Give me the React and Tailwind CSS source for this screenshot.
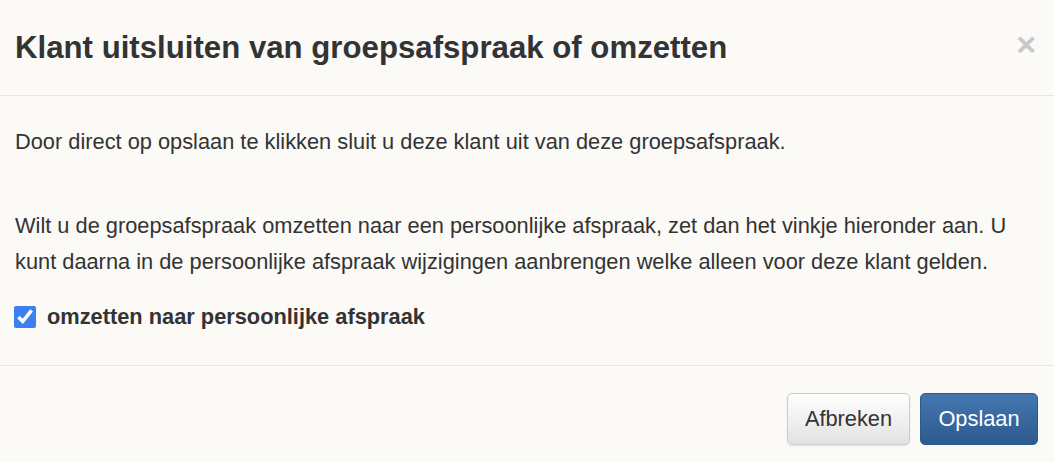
export default function App() {
  return (
    <div className="w-[1054px] h-[462px] bg-[#fbfaf7] text-[#333] font-['Liberation_Sans',Arial,sans-serif] flex flex-col">
      <div className="h-[96px] border-b border-[#e5e5e5] flex items-center justify-between pl-[15px] pr-[18px]">
        <h4 className="text-[31.2px] leading-none font-bold">Klant uitsluiten van groepsafspraak of omzetten</h4>
        <button className="text-[34px] leading-none font-bold text-[#c8c8c8] -mt-[8px]">×</button>
      </div>
      <div className="px-[15px] pt-[28px] text-[21.8px] leading-[36px] h-[270px] border-b border-[#e5e5e5]">
        <p>Door direct op opslaan te klikken sluit u deze klant uit van deze groepsafspraak.</p>
        <p className="mt-[48px]">
          Wilt u de groepsafspraak omzetten naar een persoonlijke afspraak, zet dan het vinkje hieronder aan. U kunt daarna in de persoonlijke afspraak wijzigingen aanbrengen welke alleen voor deze klant gelden.
        </p>
        <label className="flex items-center gap-[11px] mt-[19px] font-bold">
          <input type="checkbox" defaultChecked className="w-[22px] h-[22px] accent-[#3b7ff0] ml-[-1px]" />
          omzetten naar persoonlijke afspraak
        </label>
      </div>
      <div className="flex justify-end gap-[10px] pr-[16px] pt-[27px]">
        <button className="h-[52px] w-[123px] text-[21.8px] rounded-[5px] border border-[#ccc] bg-gradient-to-b from-white to-[#e2e2e2] text-[#333] shadow-[0_1px_2px_rgba(0,0,0,0.1)]">Afbreken</button>
        <button className="h-[52px] w-[118px] text-[21.8px] rounded-[5px] border border-[#2d5a8e] bg-gradient-to-b from-[#4477b1] to-[#2e5a8e] text-white">Opslaan</button>
      </div>
    </div>
  );
}
